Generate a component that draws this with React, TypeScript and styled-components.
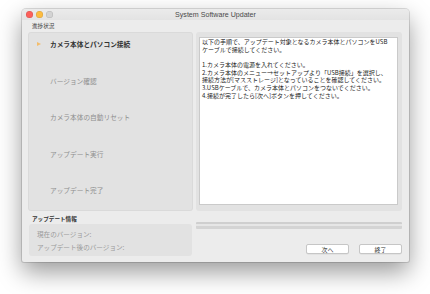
import React from 'react';
import styled, {createGlobalStyle} from "styled-components";

const GlobalStyle = createGlobalStyle`
  html, body {
    margin: 0;
    padding: 0;
    background: #ffffff;
    width: 430px;
    height: 294px;
    overflow: hidden;
  }
`;

const JP = `"Noto Sans CJK JP", "Noto Sans", sans-serif`;

const steps = [
    'カメラ本体とパソコン接続',
    'バージョン確認',
    'カメラ本体の自動リセット',
    'アップデート実行',
    'アップデート完了',
];

const instructions = [
    '以下の手順で、アップデート対象となるカメラ本体とパソコンをUSB',
    'ケーブルで接続してください。',
    '',
    '1.カメラ本体の電源を入れてください。',
    '2.カメラ本体のメニュー→セットアップより「USB接続」を選択し、',
    '接続方法が[マスストレージ]となっていることを確認してください。',
    '3.USBケーブルで、カメラ本体とパソコンをつないでください。',
    '4.接続が完了したら[次へ]ボタンを押してください。',
];

function App() {
    const current = 0;

    return (
        <Stage>
            <GlobalStyle/>
            <Window>
                <TitleBar>
                    <Lights>
                        <Light color="#fc605b"/>
                        <Light color="#fdbc40"/>
                        <Light color="#d3d3d3"/>
                    </Lights>
                    <Title>System Software Updater</Title>
                </TitleBar>

                <Body>
                    <SectionLabel>進捗状況</SectionLabel>
                    <div/>

                    <StepPanel>
                        {steps.map((step, idx) => (
                            <Step key={idx} active={idx === current}>
                                <Marker>{idx === current && <Arrow/>}</Marker>
                                {step}
                            </Step>
                        ))}
                    </StepPanel>

                    <TextPanel>
                        <TextArea>
                            {instructions.map((line, idx) => (
                                <TextLine key={idx}>{line || '\u00a0'}</TextLine>
                            ))}
                        </TextArea>
                    </TextPanel>

                    <InfoColumn>
                        <SectionLabel strong>アップデート情報</SectionLabel>
                        <InfoBox>
                            <InfoLine>現在のバージョン:</InfoLine>
                            <InfoLine>アップデート後のバージョン:</InfoLine>
                        </InfoBox>
                    </InfoColumn>

                    <ActionColumn>
                        <ProgressTrack/>
                        <Buttons>
                            <Button>次へ</Button>
                            <Button>終了</Button>
                        </Buttons>
                    </ActionColumn>
                </Body>
            </Window>
        </Stage>
    );
}

const Stage = styled.div`
  padding: 9px 0 0 22px;
`;

const Window = styled.div`
  width: 387px;
  height: 253px;
  background: #ececec;
  border-radius: 4px 4px 2px 2px;
  box-shadow: 0 10px 24px rgba(0, 0, 0, 0.4), 0 0 0 1px rgba(0, 0, 0, 0.13);
  overflow: hidden;
  display: flex;
  flex-direction: column;
`;

const TitleBar = styled.div`
  position: relative;
  height: 11px;
  display: flex;
  align-items: center;
  justify-content: center;
  background: linear-gradient(#ebebeb, #e3e3e3);
`;

const Lights = styled.div`
  position: absolute;
  left: 4px;
  top: 2px;
  display: flex;
  gap: 3px;
`;

const Light = styled.span<{ color: string }>`
  width: 7px;
  height: 7px;
  border-radius: 50%;
  background: ${p => p.color};
  box-shadow: inset 0 0 0 0.5px rgba(0, 0, 0, 0.15);
`;

const Title = styled.div`
  font-family: "Liberation Sans", Arial, sans-serif;
  font-size: 7.1px;
  color: #4a4a4a;
  line-height: 11px;
  padding-top: 1px;
`;

const Body = styled.div`
  display: grid;
  grid-template-columns: 165px 206px;
  grid-template-rows: 12px 179px 1fr;
  column-gap: 3px;
  padding: 0 7px 0 6px;
  flex: 1;
`;

const SectionLabel = styled.div<{ strong?: boolean }>`
  font-family: ${JP};
  font-size: 5.6px;
  font-weight: ${p => (p.strong ? 700 : 400)};
  color: ${p => (p.strong ? '#333' : '#444')};
  line-height: 10px;
  height: 10px;
  padding: 1px 0 0 4px;
  white-space: nowrap;
`;

const StepPanel = styled.div`
  background: #e2e2e2;
  border-radius: 3px;
  box-shadow: inset 0 0 0 1px rgba(0, 0, 0, 0.03);
  display: flex;
  flex-direction: column;
  gap: 26.5px;
  padding: 7px 0 0 9px;
`;

const Step = styled.div<{ active: boolean }>`
  display: flex;
  align-items: center;
  height: 10px;
  font-family: ${JP};
  font-size: 6.7px;
  font-weight: ${p => (p.active ? 700 : 400)};
  color: ${p => (p.active ? '#333' : '#8e8e8e')};
  white-space: nowrap;
`;

const Marker = styled.span`
  width: 13px;
  display: flex;
  align-items: center;
`;

const Arrow = styled.span`
  width: 0;
  height: 0;
  border-top: 2.5px solid transparent;
  border-bottom: 2.5px solid transparent;
  border-left: 4px solid #f3bd6c;
`;

const TextPanel = styled.div`
  background: #e2e2e2;
  border-radius: 3px;
  padding: 5px 4px 6px 3px;
  display: flex;
`;

const TextArea = styled.div`
  flex: 1;
  background: #ffffff;
  border: 1px solid #cacaca;
  padding: 0 2px;
  font-family: ${JP};
  font-size: 6px;
  color: #222;
`;

const TextLine = styled.div`
  line-height: 7.7px;
  height: 7.7px;
  white-space: nowrap;
`;

const InfoColumn = styled.div`
  display: flex;
  flex-direction: column;
  padding-top: 2px;
`;

const InfoBox = styled.div`
  margin: 0 1px;
  height: 32px;
  box-sizing: border-box;
  background: #e2e2e2;
  border-radius: 3px;
  padding: 5px 0 0 8px;
  display: flex;
  flex-direction: column;
  gap: 3px;
`;

const InfoLine = styled.div`
  font-family: ${JP};
  font-size: 6.6px;
  line-height: 10px;
  height: 10px;
  color: #9a9a9a;
  white-space: nowrap;
`;

const ActionColumn = styled.div`
  display: flex;
  flex-direction: column;
  padding-top: 11px;
`;

const ProgressTrack = styled.div`
  height: 7px;
  border-radius: 1px;
  background: linear-gradient(#cfcfcf 0 2px, #e6e6e6 2px 4px, #d4d4d4 4px 7px);
`;

const Buttons = styled.div`
  display: flex;
  justify-content: flex-end;
  gap: 10px;
  margin-top: 15px;
`;

const Button = styled.div`
  width: 43px;
  height: 10px;
  box-sizing: border-box;
  background: #ffffff;
  border: 1px solid #c6c6c6;
  border-radius: 2px;
  box-shadow: 0 0.5px 0 rgba(0, 0, 0, 0.08);
  display: flex;
  align-items: center;
  justify-content: center;
  font-family: ${JP};
  font-size: 6px;
  color: #333;
`;

export default App;
